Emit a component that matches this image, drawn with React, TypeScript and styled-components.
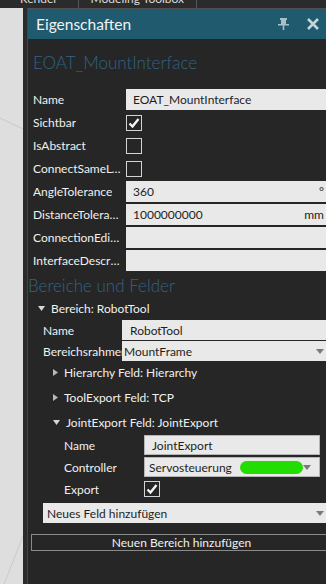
import styled, { createGlobalStyle } from 'styled-components'

const GlobalStyle = createGlobalStyle`
  html, body {
    margin: 0;
    padding: 0;
    background: #262626;
  }
  body {
    font-family: Lato, 'Noto Sans', sans-serif;
  }
`

const Screen = styled.div`
  width: 326px;
  height: 584px;
  overflow: hidden;
  display: flex;
  flex-direction: column;
  background: #262626;
`

const TopBar = styled.div`
  height: 8px;
  flex: none;
  display: flex;
  align-items: flex-end;
  overflow: hidden;
  background: #2b2b2b;
  color: #dcdcdc;
  font-size: 12px;
`

const TopItem = styled.div`
  line-height: 14px;
  margin-bottom: 2px;
  padding: 0 ${(p: { $pad: number }) => p.$pad}px;
  white-space: nowrap;
`

const TopSep = styled.div`
  width: 1px;
  height: 8px;
  background: #555;
`

const Main = styled.div`
  flex: 1;
  display: flex;
  min-height: 0;
`

const Viewport = styled.div`
  width: 23px;
  flex: none;
  background: #dedede;
  position: relative;
  svg {
    position: absolute;
    inset: 0;
  }
`

const Gutter = styled.div`
  width: 4px;
  flex: none;
  background: #2b2b2b;
  border-right: 1px solid #444;
`

const Panel = styled.div`
  flex: 1;
  min-width: 0;
  display: flex;
  flex-direction: column;
  border-top: 1px solid #505050;
`

const Header = styled.div`
  height: 30px;
  flex: none;
  display: flex;
  align-items: center;
  padding: 0 7px 0 8px;
  background: #1f5a6e;
  color: #f2f2f2;
  font-size: 15.5px;
`

const HeaderTitle = styled.div`
  flex: 1;
`

const HeaderIcons = styled.div`
  display: flex;
  align-items: center;
  gap: 18px;
`

const Body = styled.div`
  flex: 1;
  padding-left: 5px;
  display: flex;
  flex-direction: column;
`

const Title = styled.div<{ $mt: number; $ml?: number }>`
  margin-top: ${(p) => p.$mt}px;
  margin-left: ${(p) => p.$ml ?? 0}px;
  height: 23px;
  line-height: 23px;
  font-size: 17px;
  font-weight: 300;
  color: #2f6584;
  white-space: nowrap;
`

const PropGrid = styled.div<{
  $label: number
  $row: number
  $gap: number
  $mt: number
  $pl: number
  $mr: number
}>`
  display: grid;
  grid-template-columns: ${(p) => p.$label}px 1fr;
  grid-auto-rows: ${(p) => p.$row}px;
  row-gap: ${(p) => p.$gap}px;
  margin-top: ${(p) => p.$mt}px;
  padding-left: ${(p) => p.$pl}px;
  margin-right: ${(p) => p.$mr}px;
`

const Label = styled.div<{ $clip?: boolean }>`
  display: flex;
  align-items: center;
  padding-right: ${(p) => (p.$clip ? 0 : 4)}px;
  color: #f0f0f0;
  font-size: 12px;
  white-space: nowrap;
  overflow: hidden;
  span {
    overflow: hidden;
    text-overflow: ${(p) => (p.$clip ? 'clip' : 'ellipsis')};
  }
`

const Field = styled.div<{ $pl: number; $border?: boolean }>`
  display: flex;
  align-items: center;
  justify-content: space-between;
  padding: 0 6px 0 ${(p) => p.$pl}px;
  background: #e9e9e9;
  color: #1e1e1e;
  font-size: 12px;
  white-space: nowrap;
  box-sizing: border-box;
  border: ${(p) => (p.$border ? '1px solid #b5b5b5' : 'none')};
`

const Unit = styled.span`
  color: #222;
  margin-right: 2px;
`

const FieldText = styled.div`
  display: flex;
  align-items: center;
  gap: 8px;
`

const Blob = styled.span`
  width: 63px;
  height: 13px;
  border-radius: 7px;
  background: #22dd00;
`

const CheckCell = styled.div`
  display: flex;
  align-items: center;
`

const Box = styled.div`
  width: 16px;
  height: 16px;
  box-sizing: border-box;
  border: 1px solid #d4d4d4;
  display: flex;
  align-items: center;
  justify-content: center;
`

const TreeRow = styled.div<{ $pl: number; $h: number; $mt: number }>`
  height: ${(p) => p.$h}px;
  margin-top: ${(p) => p.$mt}px;
  padding-left: ${(p) => p.$pl}px;
  display: flex;
  align-items: center;
  gap: 6px;
  color: #f0f0f0;
  font-size: 12px;
  white-space: nowrap;
`

const Combo = styled(Field)<{ $mt?: number; $ml?: number; $mr?: number }>`
  margin-top: ${(p) => p.$mt ?? 0}px;
  margin-left: ${(p) => p.$ml ?? 0}px;
  margin-right: ${(p) => p.$mr ?? 0}px;
  padding-right: 8px;
`

const Button = styled.button`
  margin: 11px -6px 0 -2px;
  height: 17px;
  box-sizing: border-box;
  background: transparent;
  border: 1px solid #8a8a8a;
  color: #f0f0f0;
  font-family: inherit;
  font-size: 12px;
  padding: 0;
  line-height: 15px;
`

const Caret = ({ open }: { open: boolean }) =>
  open ? (
    <svg width="7" height="5" viewBox="0 0 7 5">
      <path d="M0 0 L7 0 L3.5 5 Z" fill="#d6d6d6" />
    </svg>
  ) : (
    <svg width="5" height="7" viewBox="0 0 5 7">
      <path d="M0 0 L5 3.5 L0 7 Z" fill="#b8b8b8" />
    </svg>
  )

const Arrow = () => (
  <svg width="8" height="5" viewBox="0 0 8 5">
    <path d="M0 0 L8 0 L4 5 Z" fill="#7a7a7a" />
  </svg>
)

const Check = ({ checked }: { checked: boolean }) => (
  <CheckCell>
    <Box>
      {checked && (
        <svg width="12" height="12" viewBox="0 0 12 12">
          <path d="M1.5 6.5 L4.5 9.5 L10.5 2" fill="none" stroke="#f4f4f4" strokeWidth="2.4" />
        </svg>
      )}
    </Box>
  </CheckCell>
)

const PinIcon = () => (
  <svg width="11" height="12" viewBox="0 0 11 12">
    <path d="M2 0 H9 V2 H8 V6 H11 V7.5 H6.3 V12 H4.7 V7.5 H0 V6 H3 V2 H2 Z" fill="#a9bfc7" />
  </svg>
)

const CloseIcon = () => (
  <svg width="12" height="12" viewBox="0 0 12 12">
    <path d="M1 1 L11 11 M11 1 L1 11" stroke="#c6d3d8" strokeWidth="2.6" />
  </svg>
)

const topProps: { label: string; kind: 'text' | 'check'; value?: string; unit?: string; checked?: boolean }[] = [
  { label: 'Name', kind: 'text', value: 'EOAT_MountInterface' },
  { label: 'Sichtbar', kind: 'check', checked: true },
  { label: 'IsAbstract', kind: 'check', checked: false },
  { label: 'ConnectSameLevel', kind: 'check', checked: false },
  { label: 'AngleTolerance', kind: 'text', value: '360', unit: '°' },
  { label: 'DistanceTolerance', kind: 'text', value: '1000000000', unit: 'mm' },
  { label: 'ConnectionEditor', kind: 'text', value: '' },
  { label: 'InterfaceDescription', kind: 'text', value: '' },
]

export default function App() {
  return (
    <Screen>
      <GlobalStyle />
      <TopBar>
        <TopItem $pad={20}>Render</TopItem>
        <TopSep />
        <TopItem $pad={12}>Modeling Toolbox</TopItem>
        <TopSep />
      </TopBar>
      <Main>
        <Viewport>
          <svg width="23" height="576">
            <line x1="0" y1="110" x2="23" y2="121" stroke="#c9c9c9" strokeWidth="1" />
            <line x1="23" y1="528" x2="4" y2="576" stroke="#cacaca" strokeWidth="1" />
          </svg>
        </Viewport>
        <Gutter />
        <Panel>
          <Header>
            <HeaderTitle>Eigenschaften</HeaderTitle>
            <HeaderIcons>
              <PinIcon />
              <CloseIcon />
            </HeaderIcons>
          </Header>
          <Body>
            <Title $mt={12}>EOAT_MountInterface</Title>
            <PropGrid $label={93} $row={21} $gap={2} $mt={15} $pl={0} $mr={-6}>
              {topProps.map((p) => [
                <Label key={p.label + 'l'}>
                  <span>{p.label}</span>
                </Label>,
                p.kind === 'check' ? (
                  <Check key={p.label + 'v'} checked={!!p.checked} />
                ) : (
                  <Field key={p.label + 'v'} $pl={7}>
                    <span>{p.value}</span>
                    {p.unit && <Unit>{p.unit}</Unit>}
                  </Field>
                ),
              ])}
            </PropGrid>

            <Title $mt={3} $ml={-5}>Bereiche und Felder</Title>
            <TreeRow $pl={5} $h={20} $mt={1}>
              <Caret open />
              <span>Bereich: RobotTool</span>
            </TreeRow>
            <PropGrid $label={79} $row={20} $gap={1} $mt={2} $pl={10} $mr={-6}>
              <Label>
                <span>Name</span>
              </Label>
              <Field $pl={8}>
                <span>RobotTool</span>
              </Field>
              <Label $clip>
                <span>Bereichsrahmen</span>
              </Label>
              <Combo $pl={2}>
                <span>MountFrame</span>
                <Arrow />
              </Combo>
            </PropGrid>

            <TreeRow $pl={20} $h={22} $mt={0}>
              <Caret open={false} />
              <span>Hierarchy Feld: Hierarchy</span>
            </TreeRow>
            <TreeRow $pl={20} $h={22} $mt={3}>
              <Caret open={false} />
              <span>ToolExport Feld: TCP</span>
            </TreeRow>
            <TreeRow $pl={20} $h={22} $mt={3}>
              <Caret open />
              <span>JointExport Feld: JointExport</span>
            </TreeRow>
            <PropGrid $label={80} $row={20} $gap={2} $mt={2} $pl={31} $mr={7}>
              <Label>
                <span>Name</span>
              </Label>
              <Field $pl={7} $border>
                <span>JointExport</span>
              </Field>
              <Label>
                <span>Controller</span>
              </Label>
              <Combo $pl={4} $border>
                <FieldText>
                  <span>Servosteuerung</span>
                  <Blob />
                </FieldText>
                <Arrow />
              </Combo>
              <Label>
                <span>Export</span>
              </Label>
              <Check checked />
            </PropGrid>

            <Combo $pl={4} $mt={4} $ml={10} $mr={-6} style={{ height: 20 }}>
              <span>Neues Feld hinzufügen</span>
              <Arrow />
            </Combo>
            <Button>Neuen Bereich hinzufügen</Button>
          </Body>
        </Panel>
      </Main>
    </Screen>
  )
}
